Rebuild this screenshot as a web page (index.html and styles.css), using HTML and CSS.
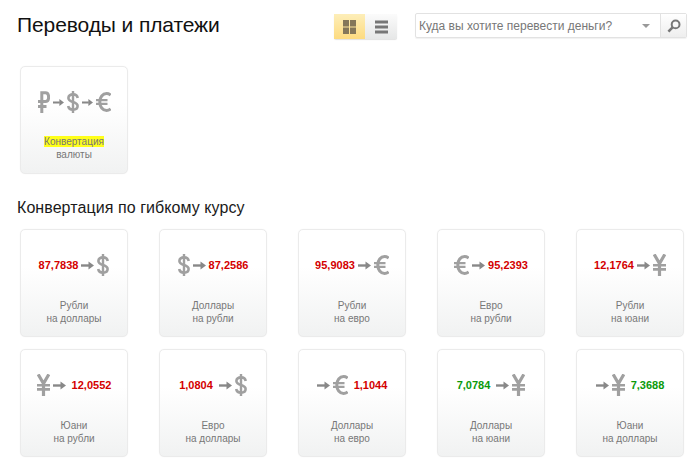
FILE: index.html
```html
<!DOCTYPE html>
<html lang="ru">
<head>
  <meta charset="UTF-8" />
  <meta name="viewport" content="width=device-width, initial-scale=1.0" />
  <title>Переводы и платежи</title>
  <link rel="stylesheet" href="styles.css">
</head>
<body>
  <svg class="sprite" xmlns="http://www.w3.org/2000/svg">
    <symbol id="arrow" viewBox="0 0 13 9">
      <path d="M0 4.5H8" fill="none" stroke="currentColor" stroke-width="2.4"/>
      <path d="M7.5 .4L13 4.5L7.5 8.6Z" fill="currentColor"/>
    </symbol>
    <symbol id="usd" viewBox="0 0 12 22">
      <path d="M10.7 7C10.4 4.7 8.4 3.4 6 3.4C3.3 3.4 1.4 4.8 1.4 7C1.4 9.4 3.6 10.2 6 11C8.5 11.8 10.6 12.6 10.6 15C10.6 17.2 8.7 18.6 6 18.6C3.4 18.6 1.5 17.3 1.2 15" fill="none" stroke="currentColor" stroke-width="2.6"/>
      <path d="M6 0V22" fill="none" stroke="currentColor" stroke-width="2.4"/>
    </symbol>
    <symbol id="eur" viewBox="0 0 15 20">
      <path d="M14.6 3.2C13.5 2.2 12.1 1.6 10.6 1.6C6.6 1.6 3.8 5.2 3.8 10C3.8 14.8 6.6 18.4 10.6 18.4C12.1 18.4 13.5 17.8 14.6 16.8" fill="none" stroke="currentColor" stroke-width="3"/>
      <path d="M0 8.2H11.5M0 11.9H11.5" fill="none" stroke="currentColor" stroke-width="2.2"/>
    </symbol>
    <symbol id="cny" viewBox="0 0 13 22">
      <path d="M1.2 0.4L6.5 9.5L11.8 0.4M6.5 9V22" fill="none" stroke="currentColor" stroke-width="3.2"/>
      <path d="M0 11.2H13M0 15.4H13" fill="none" stroke="currentColor" stroke-width="2.6"/>
    </symbol>
    <symbol id="rub" viewBox="0 0 12 22">
      <path d="M3.8 22V1.7H7.4C10 1.7 10.6 3.6 10.6 6.1C10.6 8.6 10 10.6 7.4 10.6H0M0 15.6H8.5" fill="none" stroke="currentColor" stroke-width="3"/>
    </symbol>
  </svg>

  <div class="page">
    <header class="top">
      <h1>Переводы и платежи</h1>
      <div class="view-switch">
        <span class="view-btn active">
          <svg class="ico-view" viewBox="0 0 13 14"><path d="M0 0H6V6.5H0ZM7 0H13V6.5H7ZM0 7.5H6V14H0ZM7 7.5H13V14H7Z" fill="currentColor"/></svg>
        </span>
        <span class="view-btn">
          <svg class="ico-view" viewBox="0 0 13 14"><path d="M0 .5H13V3.4H0ZM0 5.5H13V8.4H0ZM0 10.5H13V13.4H0Z" fill="currentColor"/></svg>
        </span>
      </div>
      <div class="search">
        <span class="search-text">Куда вы хотите перевести деньги?</span>
        <span class="search-caret"></span>
        <span class="search-btn">
          <svg class="ico-search" viewBox="0 0 14 14"><circle cx="8.6" cy="5.4" r="3.9" fill="none" stroke="currentColor" stroke-width="2"/><path d="M5.8 8.2L1.4 12.6" fill="none" stroke="currentColor" stroke-width="2.6"/></svg>
        </span>
      </div>
    </header>

    <div class="tiles first">
      <a class="tile">
        <div class="rate">
          <svg class="cur rub"><use href="#rub"/></svg>
          <svg class="arr short"><use href="#arrow"/></svg>
          <svg class="cur usd"><use href="#usd"/></svg>
          <svg class="arr short"><use href="#arrow"/></svg>
          <svg class="cur eur"><use href="#eur"/></svg>
        </div>
        <div class="label"><mark>Конвертация</mark><br>валюты</div>
      </a>
    </div>

    <h2>Конвертация по гибкому курсу</h2>

    <div class="tiles">
      <a class="tile">
        <div class="rate"><b class="down">87,7838</b><svg class="arr"><use href="#arrow"/></svg><svg class="cur usd"><use href="#usd"/></svg></div>
        <div class="label">Рубли<br>на доллары</div>
      </a>
      <a class="tile">
        <div class="rate"><svg class="cur usd"><use href="#usd"/></svg><svg class="arr"><use href="#arrow"/></svg><b class="down">87,2586</b></div>
        <div class="label">Доллары<br>на рубли</div>
      </a>
      <a class="tile">
        <div class="rate"><b class="down">95,9083</b><svg class="arr"><use href="#arrow"/></svg><svg class="cur eur"><use href="#eur"/></svg></div>
        <div class="label">Рубли<br>на евро</div>
      </a>
      <a class="tile">
        <div class="rate"><svg class="cur eur"><use href="#eur"/></svg><svg class="arr"><use href="#arrow"/></svg><b class="down">95,2393</b></div>
        <div class="label">Евро<br>на рубли</div>
      </a>
      <a class="tile">
        <div class="rate"><b class="down">12,1764</b><svg class="arr"><use href="#arrow"/></svg><svg class="cur cny"><use href="#cny"/></svg></div>
        <div class="label">Рубли<br>на юани</div>
      </a>
      <a class="tile">
        <div class="rate"><svg class="cur cny"><use href="#cny"/></svg><svg class="arr"><use href="#arrow"/></svg><b class="down wide-l">12,0552</b></div>
        <div class="label">Юани<br>на рубли</div>
      </a>
      <a class="tile">
        <div class="rate"><b class="down wide-r">1,0804</b><svg class="arr"><use href="#arrow"/></svg><svg class="cur usd"><use href="#usd"/></svg></div>
        <div class="label">Евро<br>на доллары</div>
      </a>
      <a class="tile">
        <div class="rate"><svg class="arr"><use href="#arrow"/></svg><svg class="cur eur"><use href="#eur"/></svg><b class="down wide-l">1,1044</b></div>
        <div class="label">Доллары<br>на евро</div>
      </a>
      <a class="tile">
        <div class="rate"><b class="up wide-r">7,0784</b><svg class="arr"><use href="#arrow"/></svg><svg class="cur cny"><use href="#cny"/></svg></div>
        <div class="label">Доллары<br>на юани</div>
      </a>
      <a class="tile">
        <div class="rate"><svg class="arr"><use href="#arrow"/></svg><svg class="cur cny"><use href="#cny"/></svg><b class="up wide-l">7,3688</b></div>
        <div class="label">Юани<br>на доллары</div>
      </a>
    </div>
  </div>
</body>
</html>
```

FILE: styles.css
```css
body {
  margin: 0;
  font-family: "Liberation Sans", Arial, sans-serif;
  background: #fff;
  color: #111;
}
.sprite {
  display: none;
}
.page {
  padding: 12px 13px 11px 17px;
}
.top {
  display: flex;
  align-items: flex-start;
  height: 54px;
}
h1 {
  margin: 0;
  font-size: 21px;
  font-weight: normal;
  line-height: 26px;
  letter-spacing: -0.1px;
  width: 317px;
}
h2 {
  margin: 0 0 11px;
  font-size: 16px;
  font-weight: normal;
  line-height: 20px;
  letter-spacing: 0.07px;
  color: #1a1a1a;
}
.view-switch {
  display: flex;
  margin: 2px 18px 0 0;
  height: 25px;
  box-shadow: 0 1px 1px rgba(0, 0, 0, 0.12);
  border-radius: 2px;
}
.view-btn {
  display: flex;
  align-items: center;
  justify-content: center;
  width: 32px;
  color: #777;
  background: linear-gradient(to bottom, #fbfbfb, #e6e7e7);
}
.view-btn.active {
  width: 31px;
  color: #84775a;
  background: linear-gradient(to bottom, #fdeeb9, #fddb80);
}
.ico-view {
  width: 13px;
  height: 14px;
}
.search {
  display: flex;
  align-items: center;
  width: 272px;
  height: 25px;
  margin-top: 1px;
  box-sizing: border-box;
  border: 1px solid #e2e2e2;
  border-radius: 2px;
  box-shadow: 0 1px 1px rgba(0, 0, 0, 0.06);
}
.search-text {
  flex: 1;
  padding-left: 3px;
  font-size: 12px;
  color: #777;
}
.search-caret {
  width: 0;
  height: 0;
  margin-right: 10px;
  border-left: 4px solid transparent;
  border-right: 4px solid transparent;
  border-top: 4px solid #999;
}
.search-btn {
  display: flex;
  align-items: center;
  justify-content: center;
  width: 25px;
  height: 100%;
  color: #777;
  border-left: 1px solid #e2e2e2;
  background: linear-gradient(to bottom, #fff, #eeeeee);
}
.ico-search {
  width: 14px;
  height: 14px;
}
.tiles {
  display: grid;
  grid-template-columns: repeat(5, 108px);
  column-gap: 31px;
  row-gap: 12px;
  margin-left: 3px;
}
.tiles.first {
  margin-bottom: 24px;
}
.tiles.first .label {
  margin-top: 22px;
}
.tile {
  display: block;
  box-sizing: border-box;
  height: 108px;
  padding-top: 24px;
  border: 1px solid #ebebeb;
  border-radius: 5px;
  background: linear-gradient(to bottom, #fff 35%, #f1f2f2);
  box-shadow: 0 0 1px rgba(0, 0, 0, 0.08);
  text-align: center;
}
.rate {
  display: flex;
  align-items: center;
  justify-content: center;
  gap: 3px;
  height: 22px;
  color: #a0a0a0;
}
.rate b {
  font-size: 11px;
  line-height: 22px;
}
.down {
  color: #d40000;
}
.up {
  color: #0a9a0a;
}
.wide-l {
  margin-left: 3px;
}
.wide-r {
  margin-right: 3px;
}
.cur {
  height: 22px;
  width: 12px;
}
.cur.eur {
  width: 15px;
  height: 20px;
}
.cur.cny {
  width: 13px;
}
.arr {
  width: 13px;
  height: 9px;
  color: #888;
}
.arr.short {
  width: 11px;
}
.label {
  margin-top: 23px;
  font-size: 10px;
  line-height: 13px;
  color: #777;
}
mark {
  background: #ffff1a;
  color: #777;
}
```
